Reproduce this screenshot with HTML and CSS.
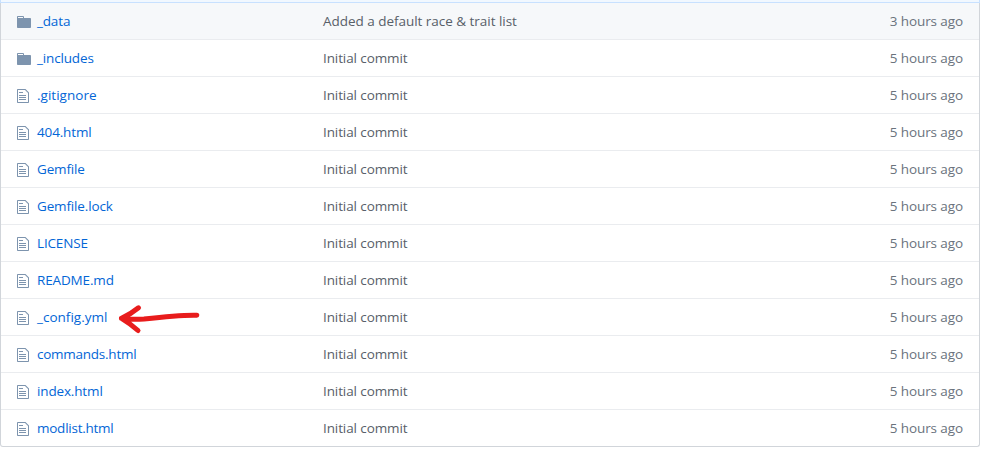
FILE: index.html
```
<!DOCTYPE html>
<html lang="en">
<head>
<meta charset="utf-8">
<title>Files</title>
<link rel="stylesheet" href="styles.css">
</head>
<body>
<svg class="defs" width="0" height="0">
<symbol id="folder" viewBox="0 0 14 16"><path d="M13 4H7V3c0-.66-.31-1-1-1H1c-.55 0-1 .45-1 1v10c0 .55.45 1 1 1h12c.55 0 1-.45 1-1V5c0-.55-.45-1-1-1zM6 4H1V3h5v1z"/></symbol>
<symbol id="file" viewBox="0 0 12 16"><path d="M6 5H2V4h4v1zM2 8h7V7H2v1zm0 2h7V9H2v1zm0 2h7v-1H2v1zm10-7.5V14c0 .55-.45 1-1 1H1c-.55 0-1-.45-1-1V2c0-.55.45-1 1-1h7.5L12 4.5zM11 5L8 2H1v12h10V5z"/></symbol>
</svg>
<div class="commit-bar"></div>
<main class="files">
<div class="row active"><svg class="icon folder"><use href="#folder"/></svg><div class="name"><a>_data</a></div><div class="message long">Added a default race &amp; trait list</div><div class="age">3 hours ago</div></div>
<div class="row"><svg class="icon folder"><use href="#folder"/></svg><div class="name"><a>_includes</a></div><div class="message">Initial commit</div><div class="age">5 hours ago</div></div>
<div class="row"><svg class="icon"><use href="#file"/></svg><div class="name loose"><a>.gitignore</a></div><div class="message">Initial commit</div><div class="age">5 hours ago</div></div>
<div class="row"><svg class="icon"><use href="#file"/></svg><div class="name"><a>404.html</a></div><div class="message">Initial commit</div><div class="age">5 hours ago</div></div>
<div class="row"><svg class="icon"><use href="#file"/></svg><div class="name"><a>Gemfile</a></div><div class="message">Initial commit</div><div class="age">5 hours ago</div></div>
<div class="row"><svg class="icon"><use href="#file"/></svg><div class="name"><a>Gemfile.lock</a></div><div class="message">Initial commit</div><div class="age">5 hours ago</div></div>
<div class="row"><svg class="icon"><use href="#file"/></svg><div class="name"><a>LICENSE</a></div><div class="message">Initial commit</div><div class="age">5 hours ago</div></div>
<div class="row"><svg class="icon"><use href="#file"/></svg><div class="name"><a>README.md</a></div><div class="message">Initial commit</div><div class="age">5 hours ago</div></div>
<div class="row"><svg class="icon"><use href="#file"/></svg><div class="name loose"><a>_config.yml</a></div><div class="message">Initial commit</div><div class="age">5 hours ago</div>
<svg class="arrow" viewBox="115 300 90 36"><path d="M196.8 315.2C180 314.8 161 317 144 319Q132 320 121.5 318.3M138.5 307.8Q131 314 121.5 318.3Q131 324 138 330.5"/></svg></div>
<div class="row"><svg class="icon"><use href="#file"/></svg><div class="name tight"><a>commands.html</a></div><div class="message">Initial commit</div><div class="age">5 hours ago</div></div>
<div class="row"><svg class="icon"><use href="#file"/></svg><div class="name"><a>index.html</a></div><div class="message">Initial commit</div><div class="age">5 hours ago</div></div>
<div class="row"><svg class="icon"><use href="#file"/></svg><div class="name tight"><a>modlist.html</a></div><div class="message">Initial commit</div><div class="age">5 hours ago</div></div>
</main>
</body>
</html>
```
FILE: styles.css
```
* { box-sizing: border-box; }
body {
  margin: 0;
  background: #fff;
  overflow: hidden;
  font: 13.5px/20px "Open Sans", "Noto Sans", sans-serif;
}
.defs { position: absolute; }
.commit-bar {
  width: 980px;
  height: 3px;
  background: #f1f8ff;
  border: 1px solid #c8e1ff;
  border-top: 0;
}
.files {
  width: 980px;
  border: 1px solid #d1d5da;
  border-top: 0;
  border-radius: 0 0 3px 3px;
}
.row {
  position: relative;
  display: flex;
  height: 37px;
  padding: 7px 16px 0;
  border-top: 1px solid #eaecef;
}
.row:first-child {
  height: 36px;
  border-top: 0;
}
.active { background: #f6f8fa; }
.icon {
  width: 12px;
  height: 16px;
  margin: 4px 8px 0 0;
  fill: #7d94ae;
}
.folder {
  width: 14px;
  margin-right: 6px;
}
.name,
.message,
.age {
  padding-top: 1px;
}
.name {
  width: 286px;
  color: #0366d6;
  letter-spacing: -0.15px;
}
.name.loose { letter-spacing: 0.02px; }
.name.tight { letter-spacing: -0.25px; }
.message {
  flex: 1;
  color: #586069;
  letter-spacing: -0.1px;
}
.message.long { letter-spacing: -0.03px; }
.age {
  color: #6a737d;
  letter-spacing: -0.1px;
}
.arrow {
  position: absolute;
  left: 114px;
  top: 1px;
  width: 90px;
  height: 36px;
  fill: none;
  stroke: #e81c1c;
  stroke-width: 5;
  stroke-linecap: round;
  stroke-linejoin: round;
}
```
